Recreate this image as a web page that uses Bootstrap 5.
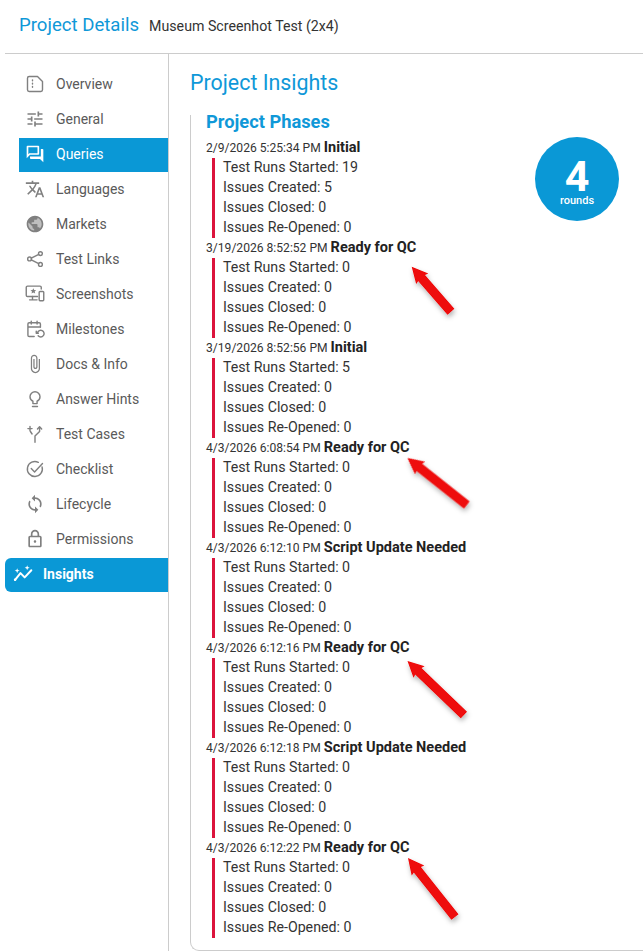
<!DOCTYPE html>
<html lang="en">
<head>
<meta charset="utf-8">
<title>Project Insights</title>
<link href="https://cdn.jsdelivr.net/npm/bootstrap@5.3.0/dist/css/bootstrap.min.css" rel="stylesheet">
<style>
html,body{height:951px;overflow:hidden;}
body{font-family:Roboto,"Liberation Sans",sans-serif;color:#2b2b2b;background:#fff;position:relative;}
.top-head{height:54px;margin-left:5px;padding-left:14px;border-bottom:1px solid #ccc;}
.top-title{font-size:18.6px;line-height:24px;color:#0f98d8;margin:0 10px 4px 0;font-weight:400;}
.top-sub{font-size:14.2px;color:#333;}
.side{width:164px;height:897px;margin-left:5px;border-right:1px solid #ccc;padding-top:14px;flex:none;}
.side-link{height:34px;margin:0 0 1px 14px;padding:0 0 2px 6px;gap:11px;font-size:14px;color:#5a5a5a;text-decoration:none;}
.side-link svg{width:20px;height:20px;flex:none;fill:#808080;}
.side-link .ln{fill:none;stroke:#808080;stroke-width:1.7;stroke-linecap:round;stroke-linejoin:round;}
.side-link .disc{fill:#808080;opacity:.5;}
.side-link .wide{width:24px;margin:0 -2px;}
.side-link.on{background:#0a98d6;color:#fff;}
.side-link.on svg{fill:#fff;}
.side-link.hero{margin-left:0;padding-left:8px;gap:10px;font-weight:700;border-radius:6px 0 0 6px;}
.side-link.hero .ln{stroke:#fff;stroke-width:2.4;}
.main-pane{padding:0 0 0 21px;min-width:0;}
.pane-title{font-size:21.4px;line-height:30px;color:#0f98d8;font-weight:400;margin:14px 0 17px;}
.phase-box{height:836px;border-left:1px solid #ccc;border-bottom:1px solid #ccc;border-bottom-left-radius:9px;padding-left:15px;}
.box-title{font-size:18.3px;line-height:13px;font-weight:700;color:#0f98d8;margin:0 0 8px;}
.ph-head{height:20px;padding-top:1.500px;font-size:12.1px;line-height:20px;color:#333;}
.ph-head b{font-size:14.5px;color:#222;}
.ph-stats{margin:2px 0 -2px 6px;padding:0 0 0 8px;border-left:3px solid #dc143c;list-style:none;font-size:14.2px;line-height:18px;color:#333;}
.ph-stats li{height:20px;}
.round-disc{width:84px;height:84px;flex:none;margin:22px 24px 0 0;padding-top:5px;background:#0a98d6;color:#fff;border-radius:50%;}
.round-num{font-size:43px;line-height:38px;font-weight:700;}
.round-lbl{font-size:11px;line-height:12px;font-weight:500;}
.arrow-layer{position:absolute;left:0;top:0;width:643px;height:951px;pointer-events:none;}
</style>
</head>
<body>
<header class="top-head d-flex align-items-center">
  <h1 class="top-title">Project Details</h1>
  <span class="top-sub">Museum Screenhot Test (2x4)</span>
</header>
<div class="d-flex">
  <nav class="side d-flex flex-column">
    <a class="side-link d-flex align-items-center" href="#"><svg viewBox="0 0 24 24"><path class="ln" d="M5 3h10l6 6v10a2 2 0 0 1-2 2H5a2 2 0 0 1-2-2V5a2 2 0 0 1 2-2z"/><path class="ln" d="M9 7v1M9 11v1M9 15v1"/></svg>Overview</a>
    <a class="side-link d-flex align-items-center" href="#"><svg viewBox="0 0 24 24"><path d="M3 17v2h6v-2H3zM3 5v2h10V5H3zm10 16v-2h8v-2h-8v-2h-2v6h2zM7 9v2H3v2h4v2h2V9H7zm14 4v-2H11v2h10zm-6-4h2V7h4V5h-4V3h-2v6z"/></svg>General</a>
    <a class="side-link on d-flex align-items-center" href="#"><svg viewBox="0 0 24 24"><path d="M15 4v7H5.17L4 12.17V4h11m1-2H3c-.55 0-1 .45-1 1v14l4-4h10c.55 0 1-.45 1-1V3c0-.55-.45-1-1-1zm5 4h-2v9H6v2c0 .55.45 1 1 1h11l4 4V7c0-.55-.45-1-1-1z"/></svg>Queries</a>
    <a class="side-link d-flex align-items-center" href="#"><svg viewBox="0 0 24 24"><path d="M12.87 15.07l-2.54-2.51.03-.03c1.74-1.94 2.98-4.17 3.71-6.53H17V4h-7V2H8v2H1v1.99h11.17C11.5 7.92 10.44 9.75 9 11.35 8.07 10.32 7.3 9.19 6.69 8h-2c.73 1.63 1.73 3.17 2.98 4.56l-5.09 5.02L4 19l5-5 3.11 3.11.76-2.04zM18.5 10h-2L12 22h2l1.12-3h4.75L21 22h2l-4.5-12zm-2.62 7l1.62-4.33L19.12 17h-3.24z"/></svg>Languages</a>
    <a class="side-link d-flex align-items-center" href="#"><svg viewBox="0 0 24 24"><circle class="disc" cx="12" cy="12" r="9.500"/><path d="M12 2C6.48 2 2 6.48 2 12s4.48 10 10 10 10-4.48 10-10S17.52 2 12 2zm-1 17.93c-3.95-.49-7-3.85-7-7.93 0-.62.08-1.21.21-1.79L9 15v1c0 1.1.9 2 2 2v1.93zm6.9-2.54c-.26-.81-1-1.39-1.9-1.39h-1v-3c0-.55-.45-1-1-1H8v-2h2c.55 0 1-.45 1-1V7h2c1.1 0 2-.9 2-2v-.41c2.93 1.19 5 4.06 5 7.41 0 2.08-.8 3.97-2.1 5.39z"/></svg>Markets</a>
    <a class="side-link d-flex align-items-center" href="#"><svg viewBox="0 0 24 24"><path class="ln" d="M16.500 6.500 7.500 11M7.500 13l9 4.500"/><circle class="ln" cx="18.500" cy="5.500" r="2.300"/><circle class="ln" cx="5.500" cy="12" r="2.300"/><circle class="ln" cx="18.500" cy="18.500" r="2.300"/></svg>Test Links</a>
    <a class="side-link d-flex align-items-center" href="#"><svg class="wide" viewBox="0 0 24 24"><path class="ln" d="M15 15H3a1.500 1.500 0 0 1-1.500-1.500V4A1.500 1.500 0 0 1 3 2.500h15A1.500 1.500 0 0 1 19.500 4v2"/><path class="ln" d="M9 15v3M5.500 19h9"/><rect class="ln" x="17" y="9" width="5.500" height="11" rx="1"/><path d="M10 5l1 2.300 2.400.2-1.800 1.600.6 2.400-2.200-1.300-2.200 1.300.6-2.400-1.800-1.600 2.400-.2z"/></svg>Screenshots</a>
    <a class="side-link d-flex align-items-center" href="#"><svg viewBox="0 0 24 24"><path class="ln" d="M11 21H5a1.500 1.500 0 0 1-1.500-1.500V6A1.500 1.500 0 0 1 5 4.500h12A1.500 1.500 0 0 1 18.500 6v4M3.500 9.500h15M7.500 2.500v3.500M14.500 2.500v3.500"/><path class="ln" d="M15 16.500a4 4 0 1 1 .8 3.600"/><path class="ln" d="M13.500 14.500v2.500h2.500"/></svg>Milestones</a>
    <a class="side-link d-flex align-items-center" href="#"><svg viewBox="0 0 24 24"><path d="M16.500 6v11.500c0 2.210-1.790 4-4 4s-4-1.790-4-4V5c0-1.380 1.120-2.500 2.500-2.500s2.500 1.120 2.500 2.500v10.500c0 .55-.45 1-1 1s-1-.45-1-1V6H10v9.500c0 1.380 1.120 2.500 2.500 2.500s2.500-1.120 2.500-2.500V5c0-2.210-1.790-4-4-4S7 2.790 7 5v12.500c0 3.040 2.460 5.500 5.500 5.500s5.500-2.460 5.500-5.500V6h-1.500z"/></svg>Docs &amp; Info</a>
    <a class="side-link d-flex align-items-center" href="#"><svg viewBox="0 0 24 24"><path class="ln" d="M9.500 17.500v-2.800C7.400 13.600 6 11.500 6 9.200A6 6 0 0 1 18 9.200c0 2.300-1.400 4.400-3.500 5.500v2.800z"/><path class="ln" d="M9 21h6"/></svg>Answer Hints</a>
    <a class="side-link d-flex align-items-center" href="#"><svg viewBox="0 0 24 24"><path class="ln" d="M12 22v-7.500L17.500 9V4"/><path class="ln" d="M15 6l2.500-2.800L20 6"/><path class="ln" d="M8.500 12 6.500 9"/><path class="ln" d="M6 3v5M3.500 5.500h5"/></svg>Test Cases</a>
    <a class="side-link d-flex align-items-center" href="#"><svg viewBox="0 0 24 24"><path class="ln" d="M20.500 9.500A9 9 0 1 1 16 4"/><path class="ln" d="M7.500 11.500l4 4L21 5.500"/></svg>Checklist</a>
    <a class="side-link d-flex align-items-center" href="#"><svg viewBox="0 0 24 24"><path d="M12 4V1L8 5l4 4V6c3.310 0 6 2.690 6 6 0 1.010-.25 1.970-.7 2.800l1.460 1.460C19.540 15.030 20 13.570 20 12c0-4.420-3.580-8-8-8zm0 14c-3.310 0-6-2.690-6-6 0-1.010.25-1.970.7-2.800L5.240 7.740C4.460 8.970 4 10.430 4 12c0 4.420 3.580 8 8 8v3l4-4-4-4v3z"/></svg>Lifecycle</a>
    <a class="side-link d-flex align-items-center" href="#"><svg viewBox="0 0 24 24"><path d="M18 8h-1V6c0-2.760-2.240-5-5-5S7 3.240 7 6v2H6c-1.100 0-2 .9-2 2v10c0 1.100.9 2 2 2h12c1.100 0 2-.9 2-2V10c0-1.100-.9-2-2-2zM9 6c0-1.660 1.340-3 3-3s3 1.340 3 3v2H9V6zm9 14H6V10h12v10zm-6-3.500c.83 0 1.500-.67 1.500-1.500s-.67-1.500-1.500-1.500-1.500.67-1.500 1.500.67 1.500 1.500 1.500z"/></svg>Permissions</a>
    <a class="side-link on hero d-flex align-items-center" href="#"><svg viewBox="0 0 24 24"><path class="ln" d="M2.500 19l6.500-8 5 5 8-8.500"/><circle cx="2.500" cy="19" r="1.500"/><path d="M5 5l.8 2.200 2.200.8-2.200.8L5 11l-.8-2.200L2 8l2.200-.8zM17 1.500l.8 2.200 2.200.8-2.200.8-.8 2.200-.8-2.200-2.200-.8 2.200-.8z"/></svg>Insights</a>
  </nav>
  <main class="main-pane flex-grow-1">
    <h2 class="pane-title">Project Insights</h2>
    <section class="phase-box d-flex justify-content-between">
      <div>
        <h3 class="box-title">Project Phases</h3>
        <div class="ph-head">2/9/2026 5:25:34 PM <b>Initial</b></div>
        <ul class="ph-stats"><li>Test Runs Started: 19</li><li>Issues Created: 5</li><li>Issues Closed: 0</li><li>Issues Re-Opened: 0</li></ul>
        <div class="ph-head">3/19/2026 8:52:52 PM <b>Ready for QC</b></div>
        <ul class="ph-stats"><li>Test Runs Started: 0</li><li>Issues Created: 0</li><li>Issues Closed: 0</li><li>Issues Re-Opened: 0</li></ul>
        <div class="ph-head">3/19/2026 8:52:56 PM <b>Initial</b></div>
        <ul class="ph-stats"><li>Test Runs Started: 5</li><li>Issues Created: 0</li><li>Issues Closed: 0</li><li>Issues Re-Opened: 0</li></ul>
        <div class="ph-head">4/3/2026 6:08:54 PM <b>Ready for QC</b></div>
        <ul class="ph-stats"><li>Test Runs Started: 0</li><li>Issues Created: 0</li><li>Issues Closed: 0</li><li>Issues Re-Opened: 0</li></ul>
        <div class="ph-head">4/3/2026 6:12:10 PM <b>Script Update Needed</b></div>
        <ul class="ph-stats"><li>Test Runs Started: 0</li><li>Issues Created: 0</li><li>Issues Closed: 0</li><li>Issues Re-Opened: 0</li></ul>
        <div class="ph-head">4/3/2026 6:12:16 PM <b>Ready for QC</b></div>
        <ul class="ph-stats"><li>Test Runs Started: 0</li><li>Issues Created: 0</li><li>Issues Closed: 0</li><li>Issues Re-Opened: 0</li></ul>
        <div class="ph-head">4/3/2026 6:12:18 PM <b>Script Update Needed</b></div>
        <ul class="ph-stats"><li>Test Runs Started: 0</li><li>Issues Created: 0</li><li>Issues Closed: 0</li><li>Issues Re-Opened: 0</li></ul>
        <div class="ph-head">4/3/2026 6:12:22 PM <b>Ready for QC</b></div>
        <ul class="ph-stats"><li>Test Runs Started: 0</li><li>Issues Created: 0</li><li>Issues Closed: 0</li><li>Issues Re-Opened: 0</li></ul>
      </div>
      <div class="round-disc d-flex flex-column align-items-center justify-content-center">
        <div class="round-num">4</div>
        <div class="round-lbl">rounds</div>
      </div>
    </section>
  </main>
</div>
<svg class="arrow-layer" viewBox="0 0 643 951" aria-hidden="true">
  <defs><filter id="sh" x="-30%" y="-30%" width="160%" height="160%"><feDropShadow dx="1" dy="3" stdDeviation="2.500" flood-color="#000" flood-opacity=".3"/></filter></defs>
  <g fill="#ee0707" filter="url(#sh)">
    <polygon transform="translate(411.700 266.700) rotate(48.900)" points="0,0 16,-8 15,-4.500 59.700,-4.500 59.700,4.500 15,4.500 16,8"/>
    <polygon transform="translate(407.500 458) rotate(38.400)" points="0,0 16,-8 15,-4.500 75.600,-4.500 75.600,4.500 15,4.500 16,8"/>
    <polygon transform="translate(407.500 661) rotate(43.700)" points="0,0 16,-8 15,-4.500 78,-4.500 78,4.500 15,4.500 16,8"/>
    <polygon transform="translate(408 858) rotate(51.500)" points="0,0 16,-8 15,-4.500 75.400,-4.500 75.400,4.500 15,4.500 16,8"/>
  </g>
</svg>
<script src="https://cdn.jsdelivr.net/npm/bootstrap@5.3.0/dist/js/bootstrap.bundle.min.js"></script>
</body>
</html>
